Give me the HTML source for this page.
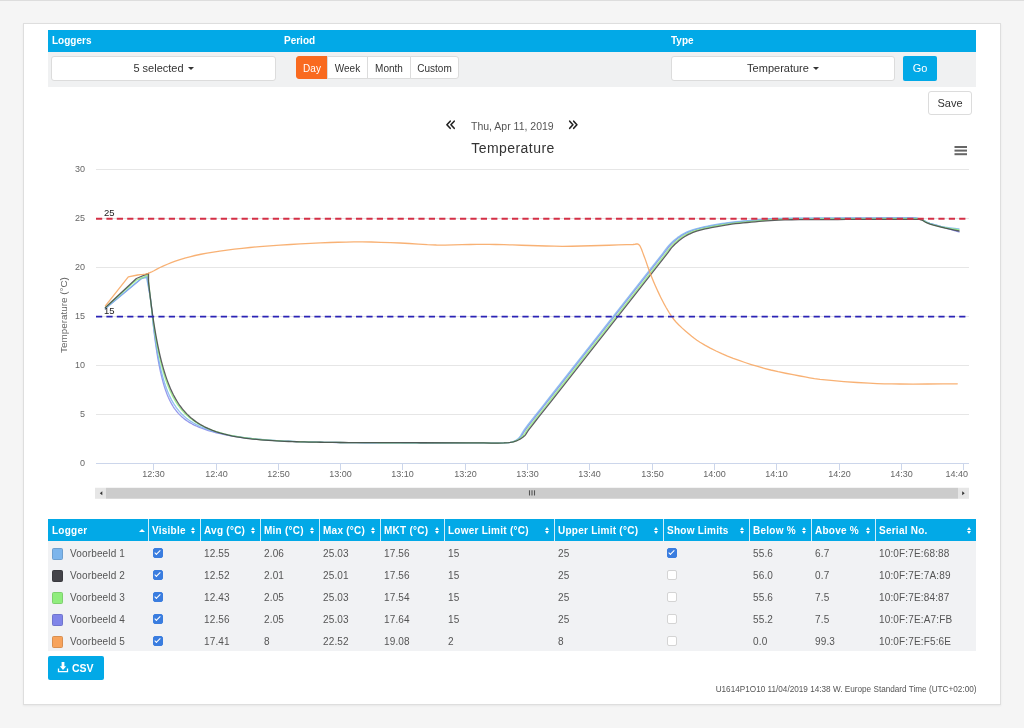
<!DOCTYPE html>
<html><head><meta charset="utf-8">
<style>
*{box-sizing:border-box;margin:0;padding:0}
html,body{width:1024px;height:728px;overflow:hidden}
body{background:#f5f5f5;font-family:"Liberation Sans",sans-serif;color:#333;position:relative}
.abs{position:absolute}
#card{left:23px;top:23px;width:978px;height:682px;background:#fff;border:1px solid #dedede;box-shadow:0 1px 2px rgba(0,0,0,0.06)}
#bar{left:48px;top:30px;width:928px;height:22px;background:#02a9e7}
.lbl{position:absolute;top:0;line-height:22px;font-size:10px;font-weight:bold;color:#fff}
#band{left:48px;top:52px;width:928px;height:35px;background:#f0f1f2}
.sel{position:absolute;height:25px;background:#fff;border:1px solid #dcdcdc;border-radius:3px;font-size:11px;line-height:23px;text-align:center;color:#333}
.caret{display:inline-block;width:0;height:0;border-left:3px solid transparent;border-right:3px solid transparent;border-top:3px solid #333;vertical-align:middle;margin-left:4px;position:relative;top:-1px}
.bg{position:absolute;top:56px;height:23px;font-size:10px;line-height:21px;padding-top:1.3px;text-align:center;color:#333;background:#fff;border:1px solid #dcdcdc}
.btn{position:absolute;background:#02a9e7;color:#fff;border-radius:2px;text-align:center}
.nav{font-size:16px;line-height:16px;color:#333}
svg text{font-family:"Liberation Sans",sans-serif}
.ax{font-size:9px;fill:#666}
.yt{font-size:9.9px;fill:#666}
.ttl{font-size:14px;fill:#333;letter-spacing:0.45px}
.pl{font-size:9.5px;fill:#222}
.th{top:520px;line-height:22px;font-size:10px;font-weight:bold;color:#fff;white-space:nowrap;letter-spacing:0.25px}
.td{line-height:22px;margin-top:2px;font-size:10px;color:#555;white-space:nowrap;letter-spacing:0.15px}
.sw{width:11px;height:12px;border:1px solid;border-radius:1.5px}
.cb{width:9.5px;height:9.5px;border:1px solid #d4d4d4;border-radius:2px;background:#fff}
.cb.on{background:#3a7ddf;border-color:#3a7ddf}
.cb.on:after{content:"";position:absolute;left:2.4px;top:0px;width:2.4px;height:4.8px;border:solid #fff;border-width:0 1.5px 1.5px 0;transform:rotate(45deg)}
.sortup{width:0;height:0;border-left:3px solid transparent;border-right:3px solid transparent;border-bottom:3.5px solid #fff}
.sortud{width:5px;height:8px}
.sortud:before{content:"";position:absolute;left:0;top:0;border-left:2.6px solid transparent;border-right:2.6px solid transparent;border-bottom:3.2px solid #fff}
.sortud:after{content:"";position:absolute;left:0;top:4.3px;border-left:2.6px solid transparent;border-right:2.6px solid transparent;border-top:3.2px solid #fff}
</style></head>
<body style="will-change:transform">
<div class="abs" style="left:0;top:0;width:1024px;height:1px;background:#dddddd"></div>
<div id="card" class="abs"></div>
<div id="bar" class="abs">
  <div class="lbl" style="left:4px">Loggers</div>
  <div class="lbl" style="left:236px">Period</div>
  <div class="lbl" style="left:623px">Type</div>
</div>
<div id="band" class="abs"></div>
<div class="sel" style="left:51px;top:56px;width:225px">5 selected<span class="caret"></span></div>
<div class="bg" style="left:296px;width:32px;background:#f96a1f;border-color:#f96a1f;color:#fff;border-radius:3px 0 0 3px">Day</div>
<div class="bg" style="left:327px;width:41px">Week</div>
<div class="bg" style="left:367px;width:44px">Month</div>
<div class="bg" style="left:410px;width:49px;border-radius:0 3px 3px 0">Custom</div>
<div class="sel" style="left:671px;top:56px;width:224px">Temperature<span class="caret"></span></div>
<div class="btn" style="left:903px;top:56px;width:34px;height:25px;font-size:11px;line-height:25px">Go</div>
<div class="sel" style="left:928px;top:91px;width:44px;height:24px;line-height:22px">Save</div>

<div class="abs" style="left:471px;top:120px;font-size:10.5px;color:#555">Thu, Apr 11, 2019</div>
<svg class="abs" style="left:0;top:0" width="1024" height="728" viewBox="0 0 1024 728">
<text x="513" y="152.5" text-anchor="middle" class="ttl">Temperature</text>
<path d="M450.2,121.2 L446.9,124.75 L450.2,128.3 M454.2,121.2 L450.9,124.75 L454.2,128.3" fill="none" stroke="#222" stroke-width="1.6" stroke-linecap="round" stroke-linejoin="round"/>
<path d="M569.7,121.2 L572.9,124.75 L569.7,128.3 M573.7,121.2 L576.9,124.75 L573.7,128.3" fill="none" stroke="#222" stroke-width="1.6" stroke-linecap="round" stroke-linejoin="round"/>
<line x1="96" y1="169.5" x2="969" y2="169.5" stroke="#e6e6e6" stroke-width="1"/>
<line x1="96" y1="218.5" x2="969" y2="218.5" stroke="#e6e6e6" stroke-width="1"/>
<line x1="96" y1="267.5" x2="969" y2="267.5" stroke="#e6e6e6" stroke-width="1"/>
<line x1="96" y1="316.5" x2="969" y2="316.5" stroke="#e6e6e6" stroke-width="1"/>
<line x1="96" y1="365.5" x2="969" y2="365.5" stroke="#e6e6e6" stroke-width="1"/>
<line x1="96" y1="414.5" x2="969" y2="414.5" stroke="#e6e6e6" stroke-width="1"/>
<line x1="96" y1="463.5" x2="969" y2="463.5" stroke="#ccd6eb" stroke-width="1"/>
<line x1="153.5" y1="463.5" x2="153.5" y2="470" stroke="#ccd6eb" stroke-width="1"/>
<text x="153.5" y="476.6" text-anchor="middle" class="ax">12:30</text>
<line x1="216.5" y1="463.5" x2="216.5" y2="470" stroke="#ccd6eb" stroke-width="1"/>
<text x="216.5" y="476.6" text-anchor="middle" class="ax">12:40</text>
<line x1="278.5" y1="463.5" x2="278.5" y2="470" stroke="#ccd6eb" stroke-width="1"/>
<text x="278.5" y="476.6" text-anchor="middle" class="ax">12:50</text>
<line x1="340.5" y1="463.5" x2="340.5" y2="470" stroke="#ccd6eb" stroke-width="1"/>
<text x="340.5" y="476.6" text-anchor="middle" class="ax">13:00</text>
<line x1="402.5" y1="463.5" x2="402.5" y2="470" stroke="#ccd6eb" stroke-width="1"/>
<text x="402.5" y="476.6" text-anchor="middle" class="ax">13:10</text>
<line x1="465.5" y1="463.5" x2="465.5" y2="470" stroke="#ccd6eb" stroke-width="1"/>
<text x="465.5" y="476.6" text-anchor="middle" class="ax">13:20</text>
<line x1="527.5" y1="463.5" x2="527.5" y2="470" stroke="#ccd6eb" stroke-width="1"/>
<text x="527.5" y="476.6" text-anchor="middle" class="ax">13:30</text>
<line x1="589.5" y1="463.5" x2="589.5" y2="470" stroke="#ccd6eb" stroke-width="1"/>
<text x="589.5" y="476.6" text-anchor="middle" class="ax">13:40</text>
<line x1="652.5" y1="463.5" x2="652.5" y2="470" stroke="#ccd6eb" stroke-width="1"/>
<text x="652.5" y="476.6" text-anchor="middle" class="ax">13:50</text>
<line x1="714.5" y1="463.5" x2="714.5" y2="470" stroke="#ccd6eb" stroke-width="1"/>
<text x="714.5" y="476.6" text-anchor="middle" class="ax">14:00</text>
<line x1="776.5" y1="463.5" x2="776.5" y2="470" stroke="#ccd6eb" stroke-width="1"/>
<text x="776.5" y="476.6" text-anchor="middle" class="ax">14:10</text>
<line x1="839.5" y1="463.5" x2="839.5" y2="470" stroke="#ccd6eb" stroke-width="1"/>
<text x="839.5" y="476.6" text-anchor="middle" class="ax">14:20</text>
<line x1="901.5" y1="463.5" x2="901.5" y2="470" stroke="#ccd6eb" stroke-width="1"/>
<text x="901.5" y="476.6" text-anchor="middle" class="ax">14:30</text>
<line x1="963.5" y1="463.5" x2="963.5" y2="470" stroke="#ccd6eb" stroke-width="1"/>
<text x="968" y="476.6" text-anchor="end" class="ax">14:40</text>
<text x="85" y="171.8" text-anchor="end" class="ax">30</text>
<text x="85" y="220.8" text-anchor="end" class="ax">25</text>
<text x="85" y="269.8" text-anchor="end" class="ax">20</text>
<text x="85" y="318.8" text-anchor="end" class="ax">15</text>
<text x="85" y="367.8" text-anchor="end" class="ax">10</text>
<text x="85" y="416.8" text-anchor="end" class="ax">5</text>
<text x="85" y="465.8" text-anchor="end" class="ax">0</text>
<text transform="translate(67,315) rotate(-90)" text-anchor="middle" class="yt">Temperature (°C)</text>
<path d="M105.40,308.50 L141.00,279.00 L147.20,276.50 L151.33,305.22 L152.33,315.71 L153.33,325.21 L154.33,333.81 L155.33,341.60 L156.33,348.66 L157.33,355.08 L158.33,360.90 L159.33,366.20 L160.33,371.02 L161.33,375.42 L162.33,379.43 L163.33,383.10 L164.33,386.45 L165.33,389.52 L166.33,392.34 L167.33,394.93 L168.33,397.31 L169.33,399.51 L170.33,401.54 L171.33,403.42 L172.33,405.15 L173.33,406.77 L174.33,408.27 L175.33,409.66 L176.33,410.97 L177.33,412.18 L178.33,413.33 L179.33,414.40 L180.33,415.40 L181.33,416.35 L182.33,417.25 L183.33,418.09 L184.33,418.89 L185.33,419.65 L186.33,420.37 L187.33,421.06 L188.33,421.71 L189.33,422.33 L190.33,422.93 L191.33,423.50 L192.33,424.05 L193.33,424.57 L194.33,425.08 L195.33,425.56 L196.33,426.03 L197.33,426.48 L198.33,426.91 L199.33,427.33 L200.33,427.73 L204.33,429.23 L208.33,430.54 L212.33,431.72 L216.33,432.77 L220.33,433.72 L224.33,434.57 L228.33,435.34 L232.33,436.05 L236.33,436.68 L240.33,437.26 L244.33,437.79 L248.33,438.27 L252.33,438.70 L256.33,439.10 L260.33,439.46 L264.33,439.78 L268.33,440.08 L272.33,440.35 L276.33,440.60 L280.33,440.82 L284.33,441.03 L288.33,441.21 L292.33,441.38 L296.33,441.54 L300.33,441.68 L304.33,441.81 L308.33,441.92 L312.33,442.03 L316.33,442.13 L320.33,442.21 L324.33,442.29 L328.33,442.37 L332.33,442.43 L336.33,442.49 L340.33,442.55 L344.33,442.60 L348.33,442.64 L352.33,442.68 L356.33,442.72 L360.33,442.76 L364.33,442.79 L368.33,442.82 L372.33,442.84 L376.33,442.86 L380.33,442.89 L384.33,442.91 L388.33,442.92 L392.33,442.94 L396.33,442.95 L400.33,442.97 L404.33,442.98 L408.33,442.99 L412.33,443.00 L416.33,443.01 L420.33,443.02 L470.00,442.80 L476.78,442.83 L483.97,442.95 L491.16,443.06 L497.94,443.10 L503.89,442.97 L508.60,442.60 L510.24,442.35 L511.63,442.09 L512.84,441.78 L513.94,441.43 L514.99,441.00 L516.04,440.48 L517.03,439.92 L517.96,439.29 L518.85,438.60 L519.70,437.85 L520.50,437.02 L521.27,436.12 L522.05,435.04 L522.72,433.89 L523.49,432.72 L524.29,431.44 L525.21,430.04 L526.30,428.50 L529.05,424.89 L532.42,420.57 L536.21,415.77 L540.20,410.73 L544.20,405.70 L547.99,400.90 L663.67,253.70 L664.84,252.16 L665.98,250.60 L667.11,249.04 L668.28,247.50 L669.53,245.98 L670.90,244.50 L672.58,242.86 L674.40,241.21 L676.31,239.60 L678.28,238.05 L680.29,236.61 L682.30,235.30 L684.17,234.21 L686.05,233.23 L687.96,232.34 L689.92,231.52 L691.96,230.75 L694.10,230.00 L696.80,229.17 L699.67,228.42 L702.65,227.73 L705.68,227.09 L708.72,226.49 L711.70,225.90 L714.58,225.34 L717.43,224.82 L720.28,224.33 L723.17,223.87 L726.13,223.43 L729.20,223.00 L732.91,222.53 L736.77,222.10 L740.73,221.69 L744.74,221.31 L748.74,220.95 L752.70,220.60 L756.52,220.26 L760.24,219.94 L763.96,219.64 L767.78,219.36 L771.79,219.11 L776.10,218.90 L782.45,218.69 L789.29,218.57 L796.49,218.50 L803.91,218.47 L811.43,218.44 L818.90,218.40 L827.03,218.35 L835.34,218.30 L843.75,218.27 L852.20,218.25 L860.61,218.22 L868.90,218.20 L876.82,218.18 L884.67,218.16 L892.49,218.14 L900.29,218.13 L908.08,218.12 L915.90,218.10 L918.26,218.62 L919.52,218.86 L920.77,219.15 L922.00,219.55 L923.20,220.14 L924.34,220.86 L925.55,221.62 L927.00,222.35 L929.94,223.41 L933.43,224.44 L937.20,225.47 L941.00,226.55 L945.34,227.86 L949.86,229.23 L954.45,230.62 L959.00,232.00" fill="none" stroke="#8085e9" stroke-width="1.3" stroke-opacity="0.85" stroke-linejoin="round" stroke-linecap="round"/>
<path d="M105.40,308.50 L141.80,278.00 L146.50,277.50 L150.50,298.19 L151.50,308.27 L152.50,317.47 L153.50,325.87 L154.50,333.55 L155.50,340.57 L156.50,347.00 L157.50,352.88 L158.50,358.28 L159.50,363.24 L160.50,367.80 L161.50,371.99 L162.50,375.85 L163.50,379.40 L164.50,382.69 L165.50,385.73 L166.50,388.54 L167.50,391.14 L168.50,393.56 L169.50,395.81 L170.50,397.90 L171.50,399.84 L172.50,401.66 L173.50,403.36 L174.50,404.96 L175.50,406.45 L176.50,407.85 L177.50,409.17 L178.50,410.41 L179.50,411.58 L180.50,412.68 L181.50,413.73 L182.50,414.72 L183.50,415.66 L184.50,416.55 L185.50,417.40 L186.50,418.21 L187.50,418.98 L188.50,419.72 L189.50,420.42 L190.50,421.10 L191.50,421.74 L192.50,422.36 L193.50,422.96 L194.50,423.53 L195.50,424.08 L196.50,424.61 L197.50,425.11 L198.50,425.61 L199.50,426.08 L200.50,426.54 L204.50,428.22 L208.50,429.71 L212.50,431.02 L216.50,432.19 L220.50,433.24 L224.50,434.18 L228.50,435.02 L232.50,435.78 L236.50,436.47 L240.50,437.09 L244.50,437.65 L248.50,438.16 L252.50,438.62 L256.50,439.04 L260.50,439.41 L264.50,439.75 L268.50,440.06 L272.50,440.34 L276.50,440.59 L280.50,440.82 L284.50,441.03 L288.50,441.22 L292.50,441.39 L296.50,441.54 L300.50,441.68 L304.50,441.80 L308.50,441.92 L312.50,442.02 L316.50,442.12 L320.50,442.20 L324.50,442.28 L328.50,442.35 L332.50,442.41 L336.50,442.47 L340.50,442.52 L344.50,442.57 L348.50,442.61 L352.50,442.65 L356.50,442.68 L360.50,442.71 L364.50,442.74 L368.50,442.77 L372.50,442.79 L376.50,442.81 L380.50,442.83 L384.50,442.85 L388.50,442.86 L392.50,442.88 L396.50,442.89 L400.50,442.90 L404.50,442.91 L408.50,442.92 L412.50,442.93 L416.50,442.94 L420.50,442.95 L470.00,442.80 L476.78,442.83 L483.97,442.95 L491.16,443.06 L497.94,443.10 L503.89,442.97 L508.60,442.60 L510.22,442.35 L511.58,442.07 L512.76,441.75 L513.83,441.38 L514.83,440.93 L515.82,440.39 L516.75,439.79 L517.62,439.14 L518.44,438.42 L519.20,437.63 L519.92,436.76 L520.60,435.82 L521.26,434.69 L521.82,433.49 L522.59,432.32 L523.39,431.04 L524.31,429.64 L525.40,428.10 L528.15,424.49 L531.52,420.17 L535.31,415.37 L539.30,410.33 L543.30,405.30 L547.09,400.50 L662.77,253.30 L663.94,251.76 L665.08,250.20 L666.21,248.64 L667.38,247.10 L668.63,245.58 L670.00,244.10 L671.68,242.46 L673.50,240.81 L675.41,239.20 L677.38,237.65 L679.39,236.21 L681.40,234.90 L683.27,233.81 L685.15,232.83 L687.06,231.94 L689.02,231.12 L691.06,230.35 L693.20,229.60 L695.90,228.77 L698.77,228.02 L701.75,227.33 L704.78,226.69 L707.82,226.09 L710.80,225.50 L713.68,224.94 L716.53,224.42 L719.38,223.93 L722.27,223.47 L725.23,223.03 L728.30,222.60 L732.01,222.13 L735.87,221.70 L739.83,221.29 L743.84,220.91 L747.84,220.55 L751.80,220.20 L755.62,219.86 L759.34,219.54 L763.06,219.24 L766.88,218.96 L770.89,218.71 L775.20,218.50 L781.55,218.29 L788.39,218.17 L795.59,218.10 L803.01,218.07 L810.53,218.04 L818.00,218.00 L826.13,217.95 L834.44,217.90 L842.85,217.87 L851.30,217.85 L859.71,217.82 L868.00,217.80 L875.92,217.78 L883.77,217.76 L891.59,217.74 L899.39,217.73 L907.18,217.72 L915.00,217.70 L918.26,218.42 L919.52,218.66 L920.77,218.95 L922.00,219.35 L923.20,219.94 L924.34,220.66 L925.55,221.42 L927.00,222.15 L929.93,223.26 L933.41,224.38 L937.18,225.43 L941.00,226.35 L945.32,227.16 L949.84,227.81 L954.44,228.39 L959.00,229.00" fill="none" stroke="#7cb5ec" stroke-width="1.3" stroke-opacity="0.85" stroke-linejoin="round" stroke-linecap="round"/>
<path d="M105.40,307.50 L136.40,280.00 L143.70,277.20 L147.80,274.50 L149.01,285.53 L150.01,295.05 L151.01,303.86 L152.01,312.00 L153.01,319.54 L154.01,326.53 L155.01,333.00 L156.01,339.02 L157.01,344.60 L158.01,349.79 L159.01,354.62 L160.01,359.11 L161.01,363.30 L162.01,367.21 L163.01,370.86 L164.01,374.27 L165.01,377.46 L166.01,380.45 L167.01,383.25 L168.01,385.87 L169.01,388.34 L170.01,390.66 L171.01,392.84 L172.01,394.90 L173.01,396.84 L174.01,398.67 L175.01,400.40 L176.01,402.04 L177.01,403.59 L178.01,405.06 L179.01,406.45 L180.01,407.77 L181.01,409.03 L182.01,410.23 L183.01,411.37 L184.01,412.46 L185.01,413.49 L186.01,414.48 L187.01,415.43 L188.01,416.34 L189.01,417.20 L190.01,418.03 L191.01,418.83 L192.01,419.59 L193.01,420.32 L194.01,421.03 L195.01,421.70 L196.01,422.36 L197.01,422.98 L198.01,423.59 L199.01,424.17 L200.01,424.73 L204.01,426.78 L208.01,428.57 L212.01,430.13 L216.01,431.51 L220.01,432.73 L224.01,433.81 L228.01,434.77 L232.01,435.62 L236.01,436.39 L240.01,437.07 L244.01,437.67 L248.01,438.21 L252.01,438.70 L256.01,439.13 L260.01,439.52 L264.01,439.87 L268.01,440.18 L272.01,440.46 L276.01,440.71 L280.01,440.93 L284.01,441.13 L288.01,441.31 L292.01,441.47 L296.01,441.62 L300.01,441.75 L304.01,441.86 L308.01,441.97 L312.01,442.06 L316.01,442.14 L320.01,442.22 L324.01,442.28 L328.01,442.34 L332.01,442.40 L336.01,442.44 L340.01,442.49 L344.01,442.53 L348.01,442.56 L352.01,442.59 L356.01,442.62 L360.01,442.64 L364.01,442.67 L368.01,442.69 L372.01,442.70 L376.01,442.72 L380.01,442.73 L384.01,442.75 L388.01,442.76 L392.01,442.77 L396.01,442.78 L400.01,442.79 L404.01,442.79 L408.01,442.80 L412.01,442.81 L416.01,442.81 L420.01,442.82 L470.00,442.80 L476.78,442.83 L483.97,442.95 L491.16,443.06 L497.94,443.10 L503.89,442.97 L508.60,442.60 L510.26,442.37 L511.70,442.12 L512.96,441.83 L514.12,441.50 L515.23,441.10 L516.37,440.62 L517.45,440.10 L518.49,439.52 L519.49,438.88 L520.46,438.17 L521.40,437.41 L522.33,436.57 L523.28,435.56 L524.12,434.49 L524.89,433.32 L525.69,432.04 L526.61,430.64 L527.70,429.10 L530.45,425.49 L533.82,421.17 L537.61,416.37 L541.60,411.33 L545.60,406.30 L549.39,401.50 L665.07,254.30 L666.24,252.76 L667.38,251.20 L668.51,249.64 L669.68,248.10 L670.93,246.58 L672.30,245.10 L673.98,243.46 L675.80,241.81 L677.71,240.20 L679.68,238.65 L681.69,237.21 L683.70,235.90 L685.57,234.81 L687.45,233.83 L689.36,232.94 L691.32,232.12 L693.36,231.35 L695.50,230.60 L698.20,229.77 L701.07,229.02 L704.05,228.33 L707.08,227.69 L710.12,227.09 L713.10,226.50 L715.98,225.94 L718.83,225.42 L721.68,224.93 L724.57,224.47 L727.53,224.03 L730.60,223.60 L734.31,223.13 L738.17,222.70 L742.13,222.29 L746.14,221.91 L750.14,221.55 L754.10,221.20 L757.92,220.86 L761.64,220.54 L765.36,220.24 L769.18,219.96 L773.19,219.71 L777.50,219.50 L783.85,219.29 L790.69,219.17 L797.89,219.10 L805.31,219.07 L812.83,219.04 L820.30,219.00 L828.43,218.95 L836.74,218.90 L845.15,218.87 L853.60,218.85 L862.01,218.82 L870.30,218.80 L878.22,218.78 L886.07,218.76 L893.89,218.74 L901.69,218.73 L909.48,218.72 L917.30,218.70 L918.26,218.92 L919.52,219.16 L920.77,219.45 L922.00,219.85 L923.20,220.44 L924.34,221.16 L925.55,221.92 L927.00,222.65 L929.93,223.75 L933.41,224.85 L937.19,225.90 L941.00,226.85 L945.33,227.75 L949.85,228.53 L954.44,229.25 L959.00,230.00" fill="none" stroke="#90ed7d" stroke-width="1.3" stroke-opacity="0.85" stroke-linejoin="round" stroke-linecap="round"/>
<path d="M105.40,307.50 L136.40,278.50 L148.50,273.40 L148.50,281.69 L149.50,290.66 L150.50,299.02 L151.50,306.81 L152.50,314.08 L153.50,320.87 L154.50,327.21 L155.50,333.13 L156.50,338.68 L157.50,343.87 L158.50,348.73 L159.50,353.29 L160.50,357.57 L161.50,361.58 L162.50,365.35 L163.50,368.90 L164.50,372.24 L165.50,375.38 L166.50,378.35 L167.50,381.14 L168.50,383.78 L169.50,386.27 L170.50,388.63 L171.50,390.86 L172.50,392.97 L173.50,394.97 L174.50,396.86 L175.50,398.67 L176.50,400.38 L177.50,402.00 L178.50,403.55 L179.50,405.02 L180.50,406.42 L181.50,407.76 L182.50,409.03 L183.50,410.25 L184.50,411.41 L185.50,412.52 L186.50,413.58 L187.50,414.60 L188.50,415.57 L189.50,416.51 L190.50,417.40 L191.50,418.26 L192.50,419.08 L193.50,419.87 L194.50,420.63 L195.50,421.36 L196.50,422.06 L197.50,422.73 L198.50,423.38 L199.50,424.00 L200.50,424.60 L204.50,426.80 L208.50,428.70 L212.50,430.35 L216.50,431.80 L220.50,433.07 L224.50,434.18 L228.50,435.16 L232.50,436.02 L236.50,436.78 L240.50,437.46 L244.50,438.05 L248.50,438.58 L252.50,439.05 L256.50,439.47 L260.50,439.83 L264.50,440.16 L268.50,440.45 L272.50,440.71 L276.50,440.94 L280.50,441.14 L284.50,441.32 L288.50,441.48 L292.50,441.62 L296.50,441.75 L300.50,441.86 L304.50,441.96 L308.50,442.05 L312.50,442.13 L316.50,442.20 L320.50,442.26 L324.50,442.31 L328.50,442.36 L332.50,442.41 L336.50,442.44 L340.50,442.48 L344.50,442.51 L348.50,442.54 L352.50,442.56 L356.50,442.58 L360.50,442.60 L364.50,442.62 L368.50,442.63 L372.50,442.65 L376.50,442.66 L380.50,442.67 L384.50,442.68 L388.50,442.69 L392.50,442.69 L396.50,442.70 L400.50,442.71 L404.50,442.71 L408.50,442.72 L412.50,442.72 L416.50,442.72 L420.50,442.73 L470.00,442.80 L476.78,442.83 L483.97,442.95 L491.16,443.06 L497.94,443.10 L503.89,442.97 L508.60,442.60 L510.28,442.38 L511.75,442.14 L513.06,441.88 L514.27,441.58 L515.45,441.21 L516.66,440.77 L517.82,440.28 L518.95,439.74 L520.04,439.15 L521.12,438.50 L522.18,437.79 L523.23,437.02 L524.33,436.09 L525.32,435.09 L526.09,433.92 L526.89,432.64 L527.81,431.24 L528.90,429.70 L531.65,426.09 L535.02,421.77 L538.81,416.97 L542.80,411.93 L546.80,406.90 L550.59,402.10 L666.27,254.90 L667.44,253.36 L668.58,251.80 L669.71,250.24 L670.88,248.70 L672.13,247.18 L673.50,245.70 L675.18,244.06 L677.00,242.41 L678.91,240.80 L680.88,239.25 L682.89,237.81 L684.90,236.50 L686.77,235.41 L688.65,234.43 L690.56,233.54 L692.52,232.72 L694.56,231.95 L696.70,231.20 L699.40,230.37 L702.27,229.62 L705.25,228.93 L708.28,228.29 L711.32,227.69 L714.30,227.10 L717.18,226.54 L720.03,226.02 L722.88,225.53 L725.77,225.07 L728.73,224.63 L731.80,224.20 L735.51,223.73 L739.37,223.30 L743.33,222.89 L747.34,222.51 L751.34,222.15 L755.30,221.80 L759.12,221.46 L762.84,221.14 L766.56,220.84 L770.38,220.56 L774.39,220.31 L778.70,220.10 L785.05,219.89 L791.89,219.77 L799.09,219.70 L806.51,219.67 L814.03,219.64 L821.50,219.60 L829.63,219.55 L837.94,219.50 L846.35,219.47 L854.80,219.45 L863.21,219.42 L871.50,219.40 L879.42,219.38 L887.27,219.36 L895.09,219.34 L902.89,219.33 L910.68,219.32 L918.50,219.30 L918.26,219.22 L919.52,219.46 L920.77,219.75 L922.00,220.15 L923.20,220.74 L924.34,221.46 L925.55,222.22 L927.00,222.95 L929.93,224.04 L933.42,225.12 L937.19,226.16 L941.00,227.15 L945.33,228.18 L949.85,229.13 L954.44,230.06 L959.00,231.00" fill="none" stroke="#434348" stroke-width="1.3" stroke-opacity="0.85" stroke-linejoin="round" stroke-linecap="round"/>
<path d="M105.40,305.80 L128.30,276.80 L137.60,275.00 L140.22,274.68 L142.84,274.42 L145.47,274.04 L148.10,273.40 L151.02,272.22 L153.93,270.71 L156.90,269.06 L160.00,267.50 L163.62,265.88 L167.38,264.26 L171.27,262.69 L175.30,261.20 L179.97,259.64 L184.82,258.16 L189.83,256.77 L195.00,255.50 L200.92,254.26 L207.05,253.16 L213.35,252.16 L219.80,251.20 L227.03,250.18 L234.43,249.22 L242.07,248.33 L250.00,247.50 L259.67,246.63 L269.80,245.85 L280.11,245.15 L290.30,244.50 L300.34,243.90 L310.43,243.35 L320.38,242.88 L330.00,242.50 L338.18,242.23 L346.04,242.03 L353.89,241.92 L362.00,241.90 L371.29,242.02 L380.85,242.28 L390.48,242.62 L400.00,243.00 L409.19,243.50 L418.34,244.10 L427.42,244.66 L436.40,245.00 L445.00,245.03 L453.56,244.86 L461.95,244.64 L470.00,244.50 L476.58,244.45 L482.83,244.42 L489.10,244.43 L495.70,244.50 L503.95,244.68 L512.60,244.94 L521.37,245.24 L530.00,245.50 L538.13,245.75 L546.16,246.00 L554.23,246.21 L562.50,246.30 L571.74,246.23 L581.23,246.02 L590.73,245.76 L600.00,245.50 L609.05,245.25 L618.37,244.97 L626.75,244.70 L633.00,244.50 L634.74,244.30 L636.13,244.01 L637.34,243.91 L638.50,244.30 L640.14,246.17 L641.52,249.16 L642.76,252.64 L644.00,256.00 L645.30,259.39 L646.51,262.88 L647.72,266.44 L649.00,270.00 L650.41,273.71 L651.87,277.46 L653.39,281.22 L655.00,285.00 L656.80,289.04 L658.71,293.14 L660.66,297.17 L662.60,301.00 L664.28,304.19 L665.96,307.26 L667.66,310.19 L669.40,313.00 L670.94,315.36 L672.47,317.58 L674.11,319.76 L676.00,322.00 L678.90,325.01 L682.21,328.13 L685.67,331.18 L689.00,334.00 L691.67,336.20 L694.25,338.22 L696.94,340.18 L700.00,342.20 L704.85,345.10 L710.31,348.08 L716.07,351.00 L721.80,353.70 L727.47,356.13 L733.22,358.37 L739.06,360.47 L745.00,362.50 L751.29,364.54 L757.68,366.47 L764.18,368.29 L770.80,370.00 L778.08,371.69 L785.61,373.26 L793.03,374.70 L800.00,376.00 L805.05,376.94 L809.67,377.78 L814.46,378.55 L820.00,379.30 L830.98,380.46 L843.84,381.55 L857.02,382.49 L869.00,383.20 L877.02,383.56 L884.35,383.78 L891.75,383.90 L900.00,384.00 L913.10,384.05 L927.56,383.99 L942.57,383.88 L957.30,383.80" fill="none" stroke="#f7a35c" stroke-width="1.3" stroke-opacity="0.85" stroke-linejoin="round" stroke-linecap="round"/>
<line x1="96" y1="218.75" x2="969" y2="218.75" stroke="#d42f45" stroke-width="1.8" stroke-dasharray="6.2,4.2"/>
<line x1="96" y1="316.6" x2="969" y2="316.6" stroke="#2b23b5" stroke-width="1.8" stroke-dasharray="6.2,4.2"/>
<text x="104" y="216" class="pl">25</text>
<text x="104" y="313.7" class="pl">15</text>
<rect x="954.5" y="146" width="12.5" height="2" fill="#666"/>
<rect x="954.5" y="149.6" width="12.5" height="2" fill="#666"/>
<rect x="954.5" y="153.2" width="12.5" height="2" fill="#666"/>
<rect x="95" y="487.8" width="874" height="10.9" fill="#f2f2f2"/>
<rect x="106" y="487.8" width="852" height="10.9" fill="#cccccc"/>
<rect x="95" y="487.8" width="11" height="10.9" fill="#e6e6e6"/>
<rect x="958" y="487.8" width="11" height="10.9" fill="#e6e6e6"/>
<path d="M99.8,493.2 L102.3,491.2 L102.3,495.2 Z" fill="#333"/>
<path d="M964.7,493.2 L962.2,491.2 L962.2,495.2 Z" fill="#333"/>
<line x1="529.5" y1="490.3" x2="529.5" y2="495.5" stroke="#555" stroke-width="1.1"/>
<line x1="532" y1="490.3" x2="532" y2="495.5" stroke="#555" stroke-width="1.1"/>
<line x1="534.5" y1="490.3" x2="534.5" y2="495.5" stroke="#555" stroke-width="1.1"/>
</svg>
<div class="abs" style="left:48px;top:519px;width:928px;height:22px;background:#02a9e7"></div>
<div class="abs" style="left:48px;top:541px;width:928px;height:110px;background:#f1f2f4"></div>
<div class="abs" style="left:148px;top:519px;width:1px;height:22px;background:#cfeefa"></div>
<div class="abs th" style="left:52px">Logger</div>
<div class="abs sortup" style="left:139px;top:529px"></div>
<div class="abs" style="left:200px;top:519px;width:1px;height:22px;background:#cfeefa"></div>
<div class="abs th" style="left:152px">Visible</div>
<div class="abs sortud" style="left:191px;top:526.5px"></div>
<div class="abs" style="left:260px;top:519px;width:1px;height:22px;background:#cfeefa"></div>
<div class="abs th" style="left:204px">Avg (°C)</div>
<div class="abs sortud" style="left:251px;top:526.5px"></div>
<div class="abs" style="left:319px;top:519px;width:1px;height:22px;background:#cfeefa"></div>
<div class="abs th" style="left:264px">Min (°C)</div>
<div class="abs sortud" style="left:310px;top:526.5px"></div>
<div class="abs" style="left:380px;top:519px;width:1px;height:22px;background:#cfeefa"></div>
<div class="abs th" style="left:323px">Max (°C)</div>
<div class="abs sortud" style="left:371px;top:526.5px"></div>
<div class="abs" style="left:444px;top:519px;width:1px;height:22px;background:#cfeefa"></div>
<div class="abs th" style="left:384px">MKT (°C)</div>
<div class="abs sortud" style="left:435px;top:526.5px"></div>
<div class="abs" style="left:554px;top:519px;width:1px;height:22px;background:#cfeefa"></div>
<div class="abs th" style="left:448px">Lower Limit (°C)</div>
<div class="abs sortud" style="left:545px;top:526.5px"></div>
<div class="abs" style="left:663px;top:519px;width:1px;height:22px;background:#cfeefa"></div>
<div class="abs th" style="left:558px">Upper Limit (°C)</div>
<div class="abs sortud" style="left:654px;top:526.5px"></div>
<div class="abs" style="left:749px;top:519px;width:1px;height:22px;background:#cfeefa"></div>
<div class="abs th" style="left:667px">Show Limits</div>
<div class="abs sortud" style="left:740px;top:526.5px"></div>
<div class="abs" style="left:811px;top:519px;width:1px;height:22px;background:#cfeefa"></div>
<div class="abs th" style="left:753px">Below %</div>
<div class="abs sortud" style="left:802px;top:526.5px"></div>
<div class="abs" style="left:875px;top:519px;width:1px;height:22px;background:#cfeefa"></div>
<div class="abs th" style="left:815px">Above %</div>
<div class="abs sortud" style="left:866px;top:526.5px"></div>
<div class="abs th" style="left:879px">Serial No.</div>
<div class="abs sortud" style="left:967px;top:526.5px"></div>
<div class="abs sw" style="left:52px;top:548px;background:#7cb5ec;border-color:#6d9fcf"></div>
<div class="abs td" style="left:70px;top:541px">Voorbeeld 1</div>
<div class="abs cb on" style="left:153px;top:548px"></div>
<div class="abs td" style="left:204px;top:541px">12.55</div>
<div class="abs td" style="left:264px;top:541px">2.06</div>
<div class="abs td" style="left:323px;top:541px">25.03</div>
<div class="abs td" style="left:384px;top:541px">17.56</div>
<div class="abs td" style="left:448px;top:541px">15</div>
<div class="abs td" style="left:558px;top:541px">25</div>
<div class="abs cb on" style="left:667px;top:548px"></div>
<div class="abs td" style="left:753px;top:541px">55.6</div>
<div class="abs td" style="left:815px;top:541px">6.7</div>
<div class="abs td" style="left:879px;top:541px">10:0F:7E:68:88</div>
<div class="abs sw" style="left:52px;top:570px;background:#434348;border-color:#3a3a3f"></div>
<div class="abs td" style="left:70px;top:563px">Voorbeeld 2</div>
<div class="abs cb on" style="left:153px;top:570px"></div>
<div class="abs td" style="left:204px;top:563px">12.52</div>
<div class="abs td" style="left:264px;top:563px">2.01</div>
<div class="abs td" style="left:323px;top:563px">25.01</div>
<div class="abs td" style="left:384px;top:563px">17.56</div>
<div class="abs td" style="left:448px;top:563px">15</div>
<div class="abs td" style="left:558px;top:563px">25</div>
<div class="abs cb" style="left:667px;top:570px"></div>
<div class="abs td" style="left:753px;top:563px">56.0</div>
<div class="abs td" style="left:815px;top:563px">0.7</div>
<div class="abs td" style="left:879px;top:563px">10:0F:7E:7A:89</div>
<div class="abs sw" style="left:52px;top:592px;background:#90ed7d;border-color:#7ed06e"></div>
<div class="abs td" style="left:70px;top:585px">Voorbeeld 3</div>
<div class="abs cb on" style="left:153px;top:592px"></div>
<div class="abs td" style="left:204px;top:585px">12.43</div>
<div class="abs td" style="left:264px;top:585px">2.05</div>
<div class="abs td" style="left:323px;top:585px">25.03</div>
<div class="abs td" style="left:384px;top:585px">17.54</div>
<div class="abs td" style="left:448px;top:585px">15</div>
<div class="abs td" style="left:558px;top:585px">25</div>
<div class="abs cb" style="left:667px;top:592px"></div>
<div class="abs td" style="left:753px;top:585px">55.6</div>
<div class="abs td" style="left:815px;top:585px">7.5</div>
<div class="abs td" style="left:879px;top:585px">10:0F:7E:84:87</div>
<div class="abs sw" style="left:52px;top:614px;background:#8085e9;border-color:#7075cd"></div>
<div class="abs td" style="left:70px;top:607px">Voorbeeld 4</div>
<div class="abs cb on" style="left:153px;top:614px"></div>
<div class="abs td" style="left:204px;top:607px">12.56</div>
<div class="abs td" style="left:264px;top:607px">2.05</div>
<div class="abs td" style="left:323px;top:607px">25.03</div>
<div class="abs td" style="left:384px;top:607px">17.64</div>
<div class="abs td" style="left:448px;top:607px">15</div>
<div class="abs td" style="left:558px;top:607px">25</div>
<div class="abs cb" style="left:667px;top:614px"></div>
<div class="abs td" style="left:753px;top:607px">55.2</div>
<div class="abs td" style="left:815px;top:607px">7.5</div>
<div class="abs td" style="left:879px;top:607px">10:0F:7E:A7:FB</div>
<div class="abs sw" style="left:52px;top:636px;background:#f7a35c;border-color:#d98f50"></div>
<div class="abs td" style="left:70px;top:629px">Voorbeeld 5</div>
<div class="abs cb on" style="left:153px;top:636px"></div>
<div class="abs td" style="left:204px;top:629px">17.41</div>
<div class="abs td" style="left:264px;top:629px">8</div>
<div class="abs td" style="left:323px;top:629px">22.52</div>
<div class="abs td" style="left:384px;top:629px">19.08</div>
<div class="abs td" style="left:448px;top:629px">2</div>
<div class="abs td" style="left:558px;top:629px">8</div>
<div class="abs cb" style="left:667px;top:636px"></div>
<div class="abs td" style="left:753px;top:629px">0.0</div>
<div class="abs td" style="left:815px;top:629px">99.3</div>
<div class="abs td" style="left:879px;top:629px">10:0F:7E:F5:6E</div>
<div class="btn" style="left:48px;top:656px;width:56px;height:24px"></div>
<svg class="abs" style="left:0;top:0" width="1024" height="728"><path d="M61.6,662 H64.4 V666.2 H66.2 L63,670 L59.8,666.2 H61.6 Z" fill="#fff"/><path d="M58.5,668.6 V671.6 H67.5 V668.6" fill="none" stroke="#fff" stroke-width="1.3"/></svg>
<div class="abs" style="left:72px;top:656px;font-size:10.5px;line-height:24px;font-weight:bold;color:#fff;margin-top:-0.5px">CSV</div>
<div class="abs" style="right:47.5px;top:685px;font-size:8.2px;color:#555">U1614P1O10 11/04/2019 14:38 W. Europe Standard Time (UTC+02:00)</div>
</body></html>
